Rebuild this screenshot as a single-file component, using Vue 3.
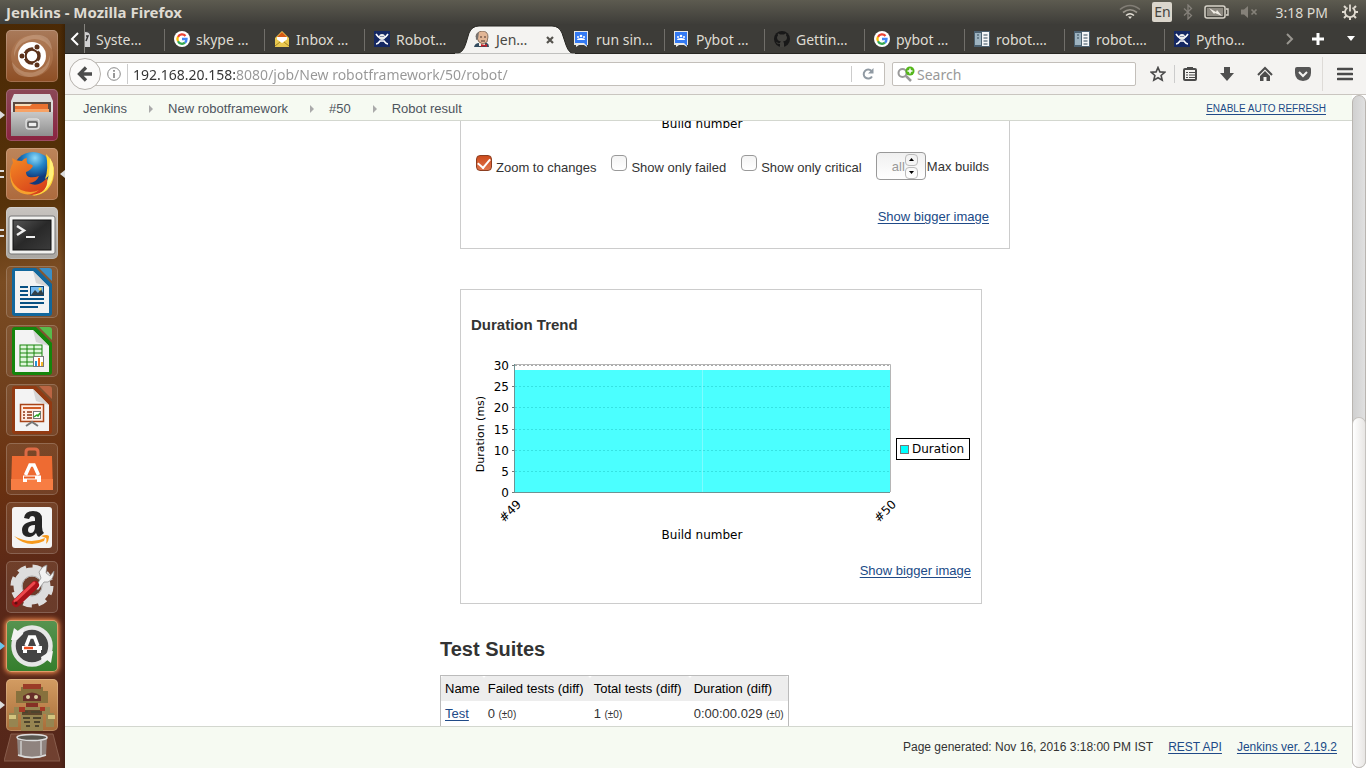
<script setup>
import { ref } from 'vue'

const tabs = [
  { icon: 'doc', title: 'Syste…', first: true },
  { icon: 'google', title: 'skype …' },
  { icon: 'mail', title: 'Inbox …' },
  { icon: 'robot', title: 'Robot…' },
  { icon: 'jenkins', title: 'Jen…', active: true },
  { icon: 'groups', title: 'run sin…' },
  { icon: 'groups', title: 'Pybot …' },
  { icon: 'github', title: 'Gettin…' },
  { icon: 'google', title: 'pybot …' },
  { icon: 'server', title: 'robot.…' },
  { icon: 'server', title: 'robot.…' },
  { icon: 'robot', title: 'Pytho…' }
]

const url = ref('192.168.20.158:8080/job/New robotframework/50/robot/')
const query = ref('')
const zoom = ref(true)
const failed = ref(false)
const critical = ref(false)
const maxBuilds = ref('all')
const ticks = [30, 25, 20, 15, 10, 5, 0]
const tickY = (v) => 147.5 - Math.round(v * 4.23)
</script>

<template>
  <div class="desktop">
    <header class="panel">
      <span class="window-title">Jenkins - Mozilla Firefox</span>
      <div class="indicators">
        <svg width="22" height="16" viewBox="0 0 22 16" fill="none" stroke-width="1.6">
          <path d="M1 5.500Q11-2.500 21 5.500" stroke="#817d75" />
          <path d="M4 8.500Q11 3 18 8.500" stroke="#99958b" />
          <path d="M7 11.500Q11 8 15 11.500" stroke="#e6e1d8" />
          <path d="M9 12.500h4l-2 2.500z" fill="#e6e1d8" />
        </svg>
        <span class="lang">En</span>
        <svg width="10" height="16" viewBox="0 0 10 16" fill="none" stroke="#85817a" stroke-width="1.300">
          <path d="M1 4.500l7.500 7L5 15V1l3.500 3.500L1 11.500" />
        </svg>
        <svg width="25" height="14" viewBox="0 0 25 14">
          <rect x="1" y="1" width="20" height="12" rx="2" fill="none" stroke="#d8d3c9" stroke-width="1.500" />
          <rect x="3" y="3" width="16" height="8" fill="#8d8980" />
          <path d="M22 4h2v6h-2" fill="none" stroke="#d8d3c9" stroke-width="1.400" />
          <path d="M5 3l7 4 1-2 5 6-7-3-1 1z" fill="#efebe3" />
        </svg>
        <svg width="18" height="14" viewBox="0 0 18 14">
          <path d="M1 4.500h3l4-3.500v12l-4-3.500H1z" fill="#858179" />
          <path d="M11.500 4.500l5 5m0-5l-5 5" stroke="#858179" stroke-width="1.700" />
        </svg>
        <span class="clock">3:18 PM</span>
        <svg width="18" height="18" viewBox="0 0 18 18" fill="none" stroke="#dfdad0">
          <path d="M6.500 4.800a5 5 0 1 0 5 0M9 1.500v7" stroke-width="1.800" />
          <path d="M9 14v3M5.500 12.500l-2.500 2.500M12.500 12.500l2.500 2.500M4 9H1M14 9h3M5 5L3 3M13 5l2-2" stroke-width="2" />
        </svg>
      </div>
    </header>

    <nav class="launcher" aria-label="Launcher">
      <button class="tile" aria-label="Dash">
        <svg viewBox="0 0 52 52">
          <circle cx="26" cy="26" r="21" fill="#b88058" opacity=".45" />
          <path d="M8 27Q7 8 27 5q18-2 19 15Q37 6 23 10 10 14 8 27zM44 25q1 19-19 22-18 1-19-15 9 13 23 10 13-4 15-17z" fill="#d5b49a" opacity=".4" />
          <circle cx="26" cy="26" r="14" fill="#fff" />
          <circle cx="26" cy="26" r="7" fill="none" stroke="#5c321b" stroke-width="3.500" />
          <path d="M19 26h-5M29.500 19.900l3-5M29.500 32.100l3 5" stroke="#fff" stroke-width="6" />
          <g fill="#5c321b"><circle cx="16" cy="26" r="2.500" /><circle cx="31" cy="17" r="2.500" /><circle cx="31" cy="35" r="2.500" /></g>
        </svg>
      </button>
      <button class="tile files" aria-label="Files">
        <i class="mark arrow"></i>
        <svg viewBox="0 0 52 52">
          <defs><linearGradient id="cab" x2="0" y2="1"><stop stop-color="#c8c8c8" /><stop offset="1" stop-color="#8f8f8f" /></linearGradient></defs>
          <path d="M8 5h36l3 7v34H5V12z" fill="#dcdcdc" />
          <path d="M7 13h38v13H7z" fill="#5b4940" />
          <path d="M9 15h32v9H9z" fill="#f4ddb9" /><path d="M9 17h15l2-2h16v10H9z" fill="#e8702f" /><path d="M9 20h34v4H9z" fill="#f7a265" />
          <path d="M5 23h42v24H5z" fill="url(#cab)" />
          <rect x="20" y="30" width="13" height="10" rx="2" fill="#bbb" stroke="#eee" />
          <rect x="22" y="33" width="9" height="5" rx="1" fill="#eee" stroke="#555" stroke-width="1.500" />
        </svg>
      </button>
      <button class="tile firefox" aria-label="Firefox">
        <i class="mark bars"></i><i class="mark arrow right"></i>
        <svg viewBox="0 0 52 52">
          <defs>
            <radialGradient id="globe" cx=".55" cy=".15"><stop stop-color="#8dd8f7" /><stop offset=".5" stop-color="#2385c8" /><stop offset="1" stop-color="#123a7c" /></radialGradient>
            <linearGradient id="fox" x2=".6" y2="1"><stop stop-color="#f58b24" /><stop offset="1" stop-color="#d8431b" /></linearGradient>
          </defs>
          <circle cx="27" cy="24" r="20" fill="url(#globe)" />
          <path d="M40 6q9 8 8 20-2 20-22 22 17-7 18-22-3 4-5 5 4-10 1-25z" fill="#ffd535" />
          <path d="M44 10q6 9 2 22-7 15-21 15 16-5 18-22z" fill="#fff07a" />
          <path d="M6 10q4 3 10 3 2-3 5-3-1 4 1 6 4 0 5 2-2 4-7 6 0 4 3 5 5 1 10-1-3 7-10 7 9 5 18-5 2 15-15 17Q6 45 4 27 4 19 7 15z" fill="url(#fox)" />
          <path d="M6 16q-5 18 9 26 10 4 18 0-9 7-18 3Q0 38 6 16z" fill="#f6a12d" />
        </svg>
      </button>
      <button class="tile terminal" aria-label="Terminal">
        <i class="mark bars"></i>
        <svg viewBox="0 0 52 52">
          <defs><linearGradient id="term" x2="1" y2="1"><stop stop-color="#555" /><stop offset=".5" stop-color="#292929" /><stop offset="1" stop-color="#3b3b3b" /></linearGradient></defs>
          <rect x="3" y="9" width="46" height="38" rx="2" fill="#f1f1ef" stroke="#777" />
          <rect x="7" y="13" width="38" height="30" fill="url(#term)" stroke="#111" />
          <path d="M11 19l7 4.500-7 4.500" fill="none" stroke="#eee" stroke-width="2.500" /><path d="M20 30h9" stroke="#eee" stroke-width="2" />
        </svg>
      </button>
      <button class="tile" aria-label="Writer">
        <svg viewBox="0 0 52 52">
          <path d="M9 2h21l16 16v29q0 3-3 3H9q-3 0-3-3V5q0-3 3-3z" fill="#12679c" />
          <path d="M33 2h10q3 0 3 3v10z" fill="#3c8fc5" /><path d="M9 5h18l16 16v26H9z" fill="#f3f3f3" /><path d="M27 5l3 12 13 4z" fill="#d5d5d5" />
          <path d="M14 21h8M14 25h8M14 29h8M14 33h24M14 37h24M14 41h18" stroke="#075083" stroke-width="2" />
          <rect x="24.500" y="20.500" width="13" height="9" fill="#76baf0" stroke="#0d4774" /><path d="M25 29l4-5 3 3 3-4 3 6z" fill="#344047" /><circle cx="34" cy="23" r="1.500" fill="#fbdc52" />
        </svg>
      </button>
      <button class="tile" aria-label="Calc">
        <svg viewBox="0 0 52 52">
          <path d="M9 2h21l16 16v29q0 3-3 3H9q-3 0-3-3V5q0-3 3-3z" fill="#15850c" />
          <path d="M33 2h10q3 0 3 3v10z" fill="#58bb4c" /><path d="M9 5h18l16 16v26H9z" fill="#f3f3f3" /><path d="M27 5l3 12 13 4z" fill="#d5d5d5" />
          <rect x="14" y="20" width="22" height="21" fill="#e0f7db" stroke="#18850d" />
          <path d="M14 24h22M14 28h22M14 32h22M14 37h22M21 20v21M28 20v21" stroke="#18850d" />
          <rect x="27.500" y="31.500" width="10" height="10" fill="#fff" stroke="#777" /><path d="M29 41v-5h2v5z" fill="#2594d8" /><path d="M32 41v-8h2v8z" fill="#f06d22" /><path d="M35 41v-4h2v4z" fill="#f2b727" />
        </svg>
      </button>
      <button class="tile" aria-label="Impress">
        <svg viewBox="0 0 52 52">
          <path d="M9 2h21l16 16v29q0 3-3 3H9q-3 0-3-3V5q0-3 3-3z" fill="#923a12" />
          <path d="M33 2h10q3 0 3 3v10z" fill="#bb6543" /><path d="M9 5h18l16 16v26H9z" fill="#f3f3f3" /><path d="M27 5l3 12 13 4z" fill="#d5d5d5" />
          <rect x="14.500" y="20.500" width="23" height="17" fill="#ffece2" stroke="#a84317" stroke-width="1.500" />
          <path d="M17 24h18" stroke="#cf5c27" stroke-width="2" /><path d="M17 28h2M17 31h2M17 34h2M21 28h5M21 31h5M21 34h5" stroke="#8f3513" stroke-width="1.500" />
          <rect x="27.500" y="27.500" width="7" height="7" fill="#fff" stroke="#777" /><path d="M28 33l3-2 1 1 2-3" fill="none" stroke="#28a324" stroke-width="1.500" /><path d="M20 42l6-4 6 4" fill="none" stroke="#777" stroke-width="2" />
        </svg>
      </button>
      <button class="tile" aria-label="Software">
        <svg viewBox="0 0 52 52">
          <path d="M20 17V9q0-3 3-3h6q3 0 3 3v8" fill="none" stroke="#dd6a45" stroke-width="3" />
          <path d="M6 13h40l1 34H5z" fill="#ee6b32" /><path d="M5 36h42v11H5z" fill="#f77d43" />
          <path d="M19.500 32L24 22h4l4.500 10" fill="none" stroke="#fff" stroke-width="3.500" /><path d="M17 34.500h18M19 34v5M33 34v5" stroke="#fff" stroke-width="4" /><path d="M18 34.500h11" stroke="#ed5f21" stroke-width="2" />
        </svg>
      </button>
      <button class="tile" aria-label="Amazon">
        <svg viewBox="0 0 52 52">
          <rect x="6" y="5" width="40" height="41" rx="3" fill="#f4f4f4" />
          <path d="M18 16q1-7 9-7 9 0 9 8v8q0 4 2 6l-5 4q-2-1-3-4-3 4-7 4-7 0-7-7 0-8 13-9v-2q0-3-3-3-2 0-3 3zm11 7q-7 0-7 5 0 3 3 3 4 0 4-8z" fill="#252525" />
          <path d="M8 34q16 9 31 2l-1 3q-16 8-30-5z" fill="#f79a1d" /><path d="M35 34q6-2 8 0 0 5-3 8 1-5 0-6z" fill="#f79a1d" />
        </svg>
      </button>
      <button class="tile" aria-label="System Settings">
        <svg viewBox="0 0 52 52">
          <circle cx="26" cy="25" r="14" fill="none" stroke="#ddd" stroke-width="9" /><circle cx="26" cy="25" r="19" fill="none" stroke="#ddd" stroke-width="5" stroke-dasharray="8.500 6.420" />
          <circle cx="26" cy="25" r="10" fill="none" stroke="#aaa" />
          <path d="M29 27l6-10-2-6q3-6 8-7l-1 8 4 3 4-5q0 8-6 11h-4l-6 8z" fill="#f2f2f2" stroke="#888" stroke-width=".7" />
          <path d="M10 42L29 24" stroke="#a91319" stroke-width="8" stroke-linecap="round" /><path d="M9 40L28 22" stroke="#ed484c" stroke-width="3" stroke-linecap="round" /><circle cx="10" cy="42" r="1.600" fill="#5d1010" />
        </svg>
      </button>
      <button class="tile updater" aria-label="Software Updater">
        <i class="mark arrow blue"></i>
        <svg viewBox="0 0 52 52">
          <circle cx="26" cy="26" r="18.500" fill="#444" stroke="#e6e6e6" stroke-width="4.500" />
          <path d="M5 20l3-12 4 3 6-2-1 5-6 6zM47 31l-2 12-4-3-5 2-1-5 8-5z" fill="#f2f2f2" />
          <path d="M20 26l3.500-9h5L32 26" fill="none" stroke="#fff" stroke-width="3.500" /><path d="M16 28h20M19 28v5M33 28v5" stroke="#fff" stroke-width="4" /><path d="M18 28h9" stroke="#ee4e20" stroke-width="2.500" />
        </svg>
      </button>
      <button class="tile robot" aria-label="Robot">
        <i class="mark arrow"></i>
        <svg viewBox="0 0 52 52">
          <path d="M15 8h22v4h5v12H10V12h5z" fill="#87713d" /><path d="M17 5h18v5H17z" fill="#9b3b27" /><path d="M17 17q9-7 18 0v5H17z" fill="#672f29" />
          <circle cx="22" cy="18" r="2" fill="#dad0a3" /><circle cx="30" cy="18" r="2" fill="#dad0a3" /><path d="M20 24h12v4H20z" fill="#853025" />
          <path d="M8 28h36v6h4v14h-8V35h-3v17H15V35h-3v13H3V34h5z" fill="#968551" /><path d="M16 31h20v5H16z" fill="#5e462c" />
          <path d="M17 33h5M25 33h9M17 39h7M27 39h8M18 43h6M28 43h6M20 47h4M29 47h4" stroke="#4e452d" stroke-width="2" /><path d="M13 28h6v5h-6zM34 28h5v4h-5z" fill="#a53925" /><path d="M3 36h7v4H3zM42 36h7v4h-7z" fill="#d3c47e" />
        </svg>
      </button>
      <button class="trash" aria-label="Trash">
        <svg viewBox="0 0 56 36">
          <path d="M7 1h42l7 27H0z" fill="#8b5a46" opacity=".5" stroke="#b7907d" />
          <path d="M13 4h30l-1 19q-14 5-28 0z" fill="#999" opacity=".75" /><ellipse cx="28" cy="4.500" rx="15" ry="3" fill="#59564f" stroke="#ddd" stroke-width="1.500" /><path d="M14 22q14 5 28 0" fill="none" stroke="#ddd" stroke-width="1.500" /><path d="M17 8v14M37 8v14" stroke="#ddd" opacity=".6" stroke-width="2" />
        </svg>
      </button>
    </nav>

    <section class="browser">
      <div class="tabbar">
        <button class="scroll-tabs" aria-label="Previous tabs"><svg width="10" height="14" viewBox="0 0 10 14"><path d="M8 1L2 7l6 6" fill="none" stroke="#fff" stroke-width="2" /></svg></button>
        <div class="tabs">
          <button v-for="(t, i) in tabs" :key="i" class="tab" :class="{ active: t.active, first: t.first }">
            <svg v-if="t.active" class="tab-shape" viewBox="0 0 120 30"><path d="M0 30Q8 30 11 19L14 9Q17 2 24 2H97Q104 2 107 9l4 12q3 9 9 9z" fill="#f4f3f1" stroke="#272622" stroke-width="1" /><path d="M0 29.500h120v1H0z" fill="#f4f3f1" /></svg>
            <svg class="favicon" width="16" height="16" viewBox="0 0 16 16">
              <g v-if="t.icon === 'doc'"><path d="M0 0h16v16H0z" fill="#444" /><path d="M11 1q5 0 5 4v11h-5z" fill="#d2d2d2" /><path d="M12 5h2l-2 5" fill="none" stroke="#333" stroke-width="1.500" /></g>
              <g v-else-if="t.icon === 'google'" fill="none" stroke-width="2.300"><circle cx="8" cy="8" r="8" fill="#fff" /><path d="M11.500 5A4.500 4.500 0 0 0 4 6" stroke="#ea4335" /><path d="M4 5.800a4.500 4.500 0 0 0 0 4.400" stroke="#fbbc05" /><path d="M4 10.200a4.500 4.500 0 0 0 7 1.500" stroke="#34a853" /><path d="M8 8h4.500q0 2.500-1.500 3.700" stroke="#4285f4" /></g>
              <g v-else-if="t.icon === 'mail'"><path d="M1 7l7-7 7 7v8.500H1z" fill="#f3cf52" /><path d="M3 6l5-5 5 5v4H3z" fill="#d65b15" /><path d="M3 6h10v4l-5 3-5-3z" fill="#fff" /><path d="M1 7l7 5 7-5v9H1z" fill="#e9c84f" /><path d="M1 15l5-4M15 15l-5-4" stroke="#a68520" /></g>
              <g v-else-if="t.icon === 'robot'"><path d="M0 0h16v16H0z" fill="#152863" /><path d="M2 3q2 3 4 4h4q2-1 4-4M2 13q2 0 4-3h4q2 3 4 3" fill="none" stroke="#fff" stroke-width="1.600" /><circle cx="8" cy="6" r="3" fill="#eee" /><path d="M6.500 5h1v1h-1zM8.500 5h1v1h-1z" fill="#152863" /></g>
              <g v-else-if="t.icon === 'jenkins'"><path d="M0 16q1-4 5-4h8q2 1 2 4z" fill="#354d60" /><path d="M5 10h6v5H5z" fill="#f8efe5" /><path d="M2 6q0-5 6-6 6 0 6 6l-1 5-4 2q-5-1-6-6z" fill="#e2b696" stroke="#5e4939" stroke-width=".7" /><path d="M2 9q-1-7 3-8L4 8z" fill="#767270" /><path d="M6 6h2M10 6h2M7 10h4" stroke="#4c352c" /><path d="M7 13l3 1 3-1v3l-3-1-3 1z" fill="#c4222b" /></g>
              <g v-else-if="t.icon === 'groups'"><path d="M0 0h14v14h-1v2l-3-2H5l-3 2v-2H0z" fill="#e9e9e5" /><path d="M1 1h12v14l-3-3H1z" fill="#347af3" /><circle cx="7" cy="5" r="1.300" fill="#fff" /><circle cx="4" cy="6" r="1" fill="#fff" /><circle cx="10" cy="6" r="1" fill="#fff" /><path d="M3 9q0-2 4-2t4 2z" fill="#fff" /></g>
              <g v-else-if="t.icon === 'github'"><circle cx="8" cy="8" r="8" fill="#181818" /><path d="M6 16v-3q-3 .500-4-2 1 0 2 1 1 .500 2 0 0-1 1-1.500-4-.500-4-4 0-1 1-2-.500-1 0-2 1 0 2 1h4q1-1 2-1 .500 1 0 2 1 1 1 2 0 3.500-4 4 1 1 1 2v3.500z" fill="#42413d" /></g>
              <g v-else><path d="M0 0h16v16H0z" fill="#4c6170" /><path d="M1 2h6v12H1z" fill="#9db3c0" /><path d="M8 1h7v14H8z" fill="#f5f7f8" /><path d="M3 4h2M3 7h2M9.500 4h4M9.500 7h4M9.500 10h4M9.500 13h4" stroke="#354a58" stroke-width="1.200" /></g>
            </svg>
            <span>{{ t.title }}</span>
            <svg v-if="t.active" class="close" width="8" height="8" viewBox="0 0 8 8"><path d="M1 1l6 6M7 1L1 7" stroke="#55534e" stroke-width="2.200" /></svg>
          </button>
        </div>
        <div class="tab-actions">
          <button aria-label="Next tabs"><svg width="8" height="12" viewBox="0 0 8 12"><path d="M1 1l5 5-5 5" fill="none" stroke="#999690" stroke-width="2" /></svg></button>
          <button aria-label="New tab"><svg width="14" height="14" viewBox="0 0 14 14"><path d="M7 1v12M1 7h12" stroke="#fff" stroke-width="3" /></svg></button>
          <button aria-label="All tabs"><svg width="8" height="5" viewBox="0 0 8 5"><path d="M0 0h8L4 5z" fill="#fff" /></svg></button>
        </div>
      </div>

      <div class="toolbar">
        <button class="back" aria-label="Back"><svg width="16" height="16" viewBox="0 0 16 16"><path d="M9 1.500L2.500 8 9 14.500M3 8h12" fill="none" stroke="#4c4c4c" stroke-width="3.300" /></svg></button>
        <div class="urlbar">
          <svg width="14" height="14" viewBox="0 0 14 14"><circle cx="7" cy="7" r="6.300" fill="none" stroke="#888" /><path d="M7 6v5M7 3v1.700" stroke="#777" stroke-width="1.500" /></svg>
          <input v-model="url" aria-label="Address">
          <button aria-label="Reload"><svg width="12" height="12" viewBox="0 0 12 12"><path d="M9.500 3A4.500 4.500 0 1 0 10 8.500" fill="none" stroke="#909aa3" stroke-width="2" /><path d="M11.500 0v5.500H6z" fill="#909aa3" /></svg></button>
        </div>
        <div class="searchbar">
          <svg width="18" height="17" viewBox="0 0 18 17"><circle cx="5.500" cy="7" r="4" fill="none" stroke="#999" stroke-width="2" /><path d="M9 10l5 5" stroke="#999" stroke-width="2.500" /><circle cx="13" cy="5" r="4.500" fill="#55b61b" /><path d="M13 2.500v5M10.500 5h5" stroke="#fff" stroke-width="1.500" /></svg>
          <input v-model="query" placeholder="Search" aria-label="Search">
        </div>
        <div class="tools">
          <button aria-label="Bookmark"><svg width="16" height="16" viewBox="0 0 16 16"><path d="M8 1.500l1.900 4.400 4.800.400-3.600 3.200 1.100 4.700L8 11.700l-4.200 2.500 1.100-4.700L1.300 6.300l4.800-.400z" fill="none" stroke="#4a4a4a" stroke-width="1.600" /></svg></button>
          <button class="split" aria-label="Bookmarks list"><svg width="16" height="16" viewBox="0 0 16 16"><rect x="2" y="3" width="12" height="11" rx="1" fill="none" stroke="#4a4a4a" stroke-width="2" /><path d="M5 3V1h6v2z" fill="#4a4a4a" /><path d="M4 6.500h2M7 6.500h6M4 9h2M7 9h6M4 11.500h2M7 11.500h6" stroke="#4a4a4a" /></svg></button>
          <button aria-label="Downloads"><svg width="16" height="16" viewBox="0 0 16 16"><path d="M5 1h6v6h4l-7 8-7-8h4z" fill="#4f4f4f" /></svg></button>
          <button aria-label="Home"><svg width="16" height="16" viewBox="0 0 16 16"><path d="M1 9l7-7 7 7" fill="none" stroke="#4c4c4c" stroke-width="2" /><path d="M3 10l5-5 5 5v5H9.500v-4h-3v4H3z" fill="#4c4c4c" /></svg></button>
          <button aria-label="Pocket"><svg width="16" height="16" viewBox="0 0 16 16"><path d="M2 1h12q2 0 2 2v4q0 7-8 8-8-1-8-8V3q0-2 2-2z" fill="#565656" /><path d="M4 6l4 4 4-4" fill="none" stroke="#f4f3f1" stroke-width="2" /></svg></button>
          <button class="menu" aria-label="Menu"><svg width="16" height="14" viewBox="0 0 16 14"><path d="M1 2h14M1 7h14M1 12h14" stroke="#4a4a4a" stroke-width="2.700" stroke-linecap="round" /></svg></button>
        </div>
      </div>

      <div class="viewport">
        <div class="page">
          <nav class="breadcrumbs" aria-label="Breadcrumbs">
            <a href="#">Jenkins</a><i></i><a href="#">New robotframework</a><i></i><a href="#">#50</a><i></i><a href="#">Robot result</a>
            <a class="refresh" href="#">ENABLE AUTO REFRESH</a>
          </nav>
          <main>
            <section class="trend results">
              <div class="caption">Build number</div>
              <form class="options" @submit.prevent>
                <label><input v-model="zoom" type="checkbox"><span>Zoom to changes</span></label>
                <label><input v-model="failed" type="checkbox"><span>Show only failed</span></label>
                <label><input v-model="critical" type="checkbox"><span>Show only critical</span></label>
                <label class="max"><span class="spin"><input v-model="maxBuilds" type="text"><span class="steps"><button type="button" aria-label="More"><svg viewBox="0 0 5 3"><path d="M0 3h5L2.500 0z" /></svg></button><button type="button" aria-label="Fewer"><svg viewBox="0 0 5 3"><path d="M0 0h5L2.500 3z" /></svg></button></span></span>Max builds</label>
              </form>
              <a class="bigger" href="#">Show bigger image</a>
            </section>
            <section class="trend duration">
              <h3>Duration Trend</h3>
              <svg class="chart" width="500" height="200" viewBox="0 0 500 200">
                <rect x="43" y="25" width="376" height="122" fill="#4bffff" />
                <path d="M231.500 25v122" stroke="#7dfcff" />
                <path d="M43 19.500h376.500V147" fill="none" stroke="#b5b5b5" />
                <g v-for="v in ticks" :key="v">
                  <path v-if="v" :d="`M44 ${tickY(v)}H419`" :stroke="v === 30 ? '#aaa' : '#35e2e2'" stroke-dasharray="2 2" />
                  <path :d="`M41 ${tickY(v)}h3`" stroke="#777" />
                  <text x="38" :y="tickY(v) + 4" text-anchor="end">{{ v }}</text>
                </g>
                <path d="M43.500 19v128.500H419" fill="none" stroke="#6d9393" />
                <text transform="translate(13 89) rotate(-90)" text-anchor="middle" class="axis">Duration (ms)</text>
                <text transform="translate(51 160) rotate(-45)" text-anchor="end">#49</text>
                <text transform="translate(426 160) rotate(-45)" text-anchor="end">#50</text>
                <text x="231" y="194" text-anchor="middle">Build number</text>
                <rect x="425.500" y="93.500" width="73" height="21" fill="#fff" stroke="#000" />
                <rect x="429.500" y="100.500" width="8" height="8" fill="#0ff" stroke="#777" />
                <text x="441" y="108">Duration</text>
              </svg>
              <a class="bigger" href="#">Show bigger image</a>
            </section>
            <h2>Test Suites</h2>
            <table>
              <thead><tr><th>Name</th><th>Failed tests (diff)</th><th>Total tests (diff)</th><th>Duration (diff)</th></tr></thead>
              <tbody><tr><td><a href="#">Test</a></td><td>0 <small>(±0)</small></td><td>1 <small>(±0)</small></td><td>0:00:00.029 <small>(±0)</small></td></tr></tbody>
            </table>
          </main>
          <footer><span>Page generated: Nov 16, 2016 3:18:00 PM IST</span><a href="#">REST API</a><a href="#">Jenkins ver. 2.19.2</a></footer>
        </div>
        <div class="scrollbar"><div class="thumb"></div></div>
      </div>
    </section>
  </div>
</template>

<style>
body { margin: 0; overflow: hidden; }
</style>

<style scoped>
* { box-sizing: border-box; }
button { padding: 0; border: 0; background: none; font: inherit; color: inherit; }
svg { display: block; flex: none; }
.desktop { height: 100vh; display: grid; grid-template: 24px minmax(0, 1fr) / 65px minmax(0, 1fr); overflow: hidden; font-family: "Noto Sans", sans-serif; font-size: 14px; }
.panel { grid-column: 1 / 3; display: flex; justify-content: space-between; align-items: center; padding: 0 7px 0 6px; background: linear-gradient(#5d5b50, #3e3d39); color: #dfdbd2; }
.window-title { font-size: 15px; font-weight: 700; line-height: 20px; }
.indicators { display: flex; align-items: center; gap: 11px; }
.lang { background: #dbd6cc; color: #45433e; width: 20px; height: 20px; line-height: 20px; text-align: center; border-radius: 2px; }
.clock { margin: 0 2px 0 6px; }

.launcher { display: flex; flex-direction: column; align-items: center; gap: 7px; padding: 6px 1px 0 0; min-height: 0; overflow: hidden; background: linear-gradient(90deg, #0000 60px, #0003), linear-gradient(165deg, #4a2905 0, #573209 24%, #7a4c22 34%, #70401d 48%, #6a3110 60%, #5a2818 74%, #55271a 100%); }
.tile { position: relative; width: 52px; height: 52px; flex: none; border-radius: 5px; background: linear-gradient(#a77f6440, #9b766040); box-shadow: inset 0 0 0 1px #ffffff30; }
.tile:first-child { background: linear-gradient(#a97a5a, #8e4e24); }
.tile.files { background: linear-gradient(#8b4857, #8a2340); }
.tile.firefox { background: linear-gradient(#bd855a, #ad6a3d); }
.tile.terminal { background: linear-gradient(#c8c4c0, #a9a6a1); }
.tile.updater { background: linear-gradient(#579350, #347e2c); box-shadow: 0 0 5px 1px #ff9555, inset 0 0 0 1px #e09b6a; }
.tile.robot { background: linear-gradient(#d39c62, #a86d39); }
.mark { position: absolute; left: -6px; top: 22px; width: 4px; height: 8px; }
.arrow { border: 4px solid transparent; border-left: 5px solid #ddd; border-right: 0; }
.arrow.blue { border-left-color: #69c5ed; }
.arrow.right { left: auto; right: -7px; border-left: 0; border-right: 5px solid #ddd; }
.bars { border: solid #ddd; border-width: 2px 0; }
.trash { width: 56px; margin-top: -5px; }

.browser { display: flex; flex-direction: column; min-width: 0; min-height: 0; background: #f4f3f1; }
.tabbar { height: 30px; display: flex; flex: none; background: #3d3c38; border-bottom: 1px solid #272622; color: #dfdbd2; }
.scroll-tabs { width: 20px; flex: none; display: grid; place-items: center; border-right: 1px solid #85837e; }
.tabs { flex: 1; display: flex; min-width: 0; }
.tab { position: relative; width: 100px; height: 30px; flex: none; display: flex; align-items: center; gap: 6px; padding-left: 9px; white-space: nowrap; }
.tab::after { content: ""; position: absolute; right: 0; top: 5px; bottom: 3px; width: 1px; background: #716f6a; }
.tab.first { width: 80px; padding-left: 0; overflow: hidden; }
.first .favicon { margin-left: -11px; }
.tab.active { z-index: 1; color: #4a4843; }
.tab.active::after, .tab:nth-child(4)::after, .tab:last-child::after { display: none; }
.tab-shape { position: absolute; left: -10px; top: 0; width: 120px; height: 30px; }
.favicon, .tab span { position: relative; }
.close { position: absolute; left: 81px; top: 12px; }
.tab-actions { display: flex; align-items: center; gap: 22px; padding-right: 11px; }
.tab-actions button:nth-child(2) { margin-left: -5px; }
.toolbar { height: 41px; flex: none; display: flex; align-items: center; padding-left: 4px; border-bottom: 1px solid #c9c5c0; }
.back { position: relative; z-index: 1; width: 32px; height: 32px; flex: none; display: grid; place-items: center; border-radius: 50%; border: 1px solid #b5b1ac; background: #fbfaf9; }
.urlbar, .searchbar { height: 24px; display: flex; align-items: center; background: #fff; border: 1px solid #c3bfba; border-radius: 2px; }
.urlbar { flex: 1; min-width: 0; margin-left: -12px; padding-left: 17px; }
input { font: inherit; min-width: 0; border: 0; outline: 0; padding: 0; margin: 0; background: transparent; }
.urlbar input { flex: 1; height: 20px; margin-left: 6px; padding-left: 5px; border-left: 1px solid #ccc; background: linear-gradient(90deg, #333 108px, #969696 108px); background-clip: text; -webkit-text-fill-color: transparent; }
.urlbar button { width: 33px; height: 16px; display: grid; place-items: center; border-left: 1px solid #ccc; }
.searchbar { width: 244px; margin-left: 7px; padding-left: 4px; gap: 2px; }
.searchbar input { flex: 1; }
.searchbar input::placeholder { color: #999; opacity: 1; }
.tools { display: flex; align-items: center; margin-left: 6px; height: 100%; }
.tools button { width: 38px; height: 18px; display: grid; place-items: center; }
.tools button:first-child { width: 32px; }
.tools .split { width: 34px; padding-right: 4px; border-left: 1px solid #ccc; }
.tools .menu { width: 44px; height: 34px; border-left: 1px solid #dedbd7; }

.viewport { flex: 1; min-height: 0; display: flex; background: #fff; }
.page { flex: 1; min-width: 0; display: flex; flex-direction: column; font-family: "Liberation Sans", Arial, sans-serif; font-size: 13px; color: #333; }
.page a { color: #204a87; text-underline-offset: 2px; }
.breadcrumbs { height: 26px; flex: none; display: flex; align-items: center; padding: 2px 26px 0 18px; background: #f6faf2; border-bottom: 1px solid #d3d7cf; }
.page .breadcrumbs a { color: #4d545d; text-decoration: none; }
.breadcrumbs i { margin: 0 15px 0 22px; border: 4px solid transparent; border-left-color: #aaa; border-right: 0; }
.page .breadcrumbs .refresh { margin-left: auto; color: #204a87; font-size: 10px; text-decoration: underline; }
main { flex: 1; min-height: 0; overflow: hidden; padding-left: 375px; }
.trend { margin-left: 20px; border: 1px solid #ccc; display: flex; flex-direction: column; }
.results { width: 550px; border-top: 0; padding: 0 20px 23px 15px; }
.caption { width: 452px; margin-top: -5px; text-align: center; font: 12px/16px "DejaVu Sans", sans-serif; color: #000; }
.options { display: flex; align-items: center; margin-top: 20px; height: 28px; white-space: nowrap; }
.options label { display: flex; align-items: center; gap: 4px; margin-right: 15px; }
.options label:nth-child(3) { margin-right: 10px; }
.options label > span:not(.spin) { padding-top: 2px; }
.options input[type=checkbox] { appearance: none; width: 16px; height: 16px; margin-bottom: 6px; border: 1px solid #999; border-radius: 4px; background: linear-gradient(#f4f4f4, #fff); }
.options input[type=checkbox]:checked { border-color: #8c3e20; background: linear-gradient(#cd4b1c, #e0744c); display: grid; place-items: center; }
.options input[type=checkbox]:checked::after { content: ""; width: 6px; height: 10px; margin-bottom: 2px; border: solid #fff; border-width: 0 2px 2px 0; transform: rotate(40deg); }
.options .max { margin: 0 0 0 auto; gap: 1px; }
.spin { width: 50px; height: 28px; display: flex; align-items: center; border: 1px solid #999; border-radius: 4px; background: linear-gradient(#f0f0f0, #fff); }
.spin input { width: 28px; text-align: right; color: #999; }
.steps { display: flex; flex-direction: column; gap: 1px; }
.steps button { width: 13px; height: 12px; display: grid; place-items: center; border: 1px solid #bbb; border-radius: 4px; }
.steps svg { width: 5px; height: 3px; }
.bigger { align-self: flex-end; line-height: 16px; }
.results .bigger { margin-top: 29px; }
.duration { width: 522px; margin-top: 40px; padding: 0 10px 24px; }
h3 { margin: 27px 0 12px; font-size: 15px; line-height: 16px; }
.duration .bigger { margin-top: 18px; }
.chart { font: 12px "DejaVu Sans", sans-serif; fill: #000; }
.chart .axis { font-size: 11px; }
h2 { margin: 33px 0 14px; font-size: 20px; line-height: 24px; }
table { border: 1px solid #bbb; border-collapse: separate; border-spacing: 0; white-space: nowrap; }
th, td { height: 25px; padding: 0 4px; text-align: left; font-weight: 400; }
th { color: #000; background: #ededed; border-radius: 3px 3px 0 0; }
th:nth-child(2) { min-width: 106px; }
th:nth-child(3) { min-width: 100px; }
small { font-size: 10px; }
footer { height: 42px; flex: none; display: flex; align-items: center; justify-content: flex-end; gap: 15px; padding: 0 15px 2px 0; background: #f6faf2; border-top: 1px solid #d3d7cf; font-size: 12px; }
.scrollbar { width: 14px; flex: none; display: flex; flex-direction: column; justify-content: flex-end; border: 1px solid #b9b5b0; border-radius: 7px; background: linear-gradient(90deg, #d0d0d0, #e0e0e0); }
.thumb { height: 52%; border-radius: 7px; background: linear-gradient(90deg, #fff, #e8e6e4); box-shadow: 0 0 0 1px #c5c2be; }
</style>
